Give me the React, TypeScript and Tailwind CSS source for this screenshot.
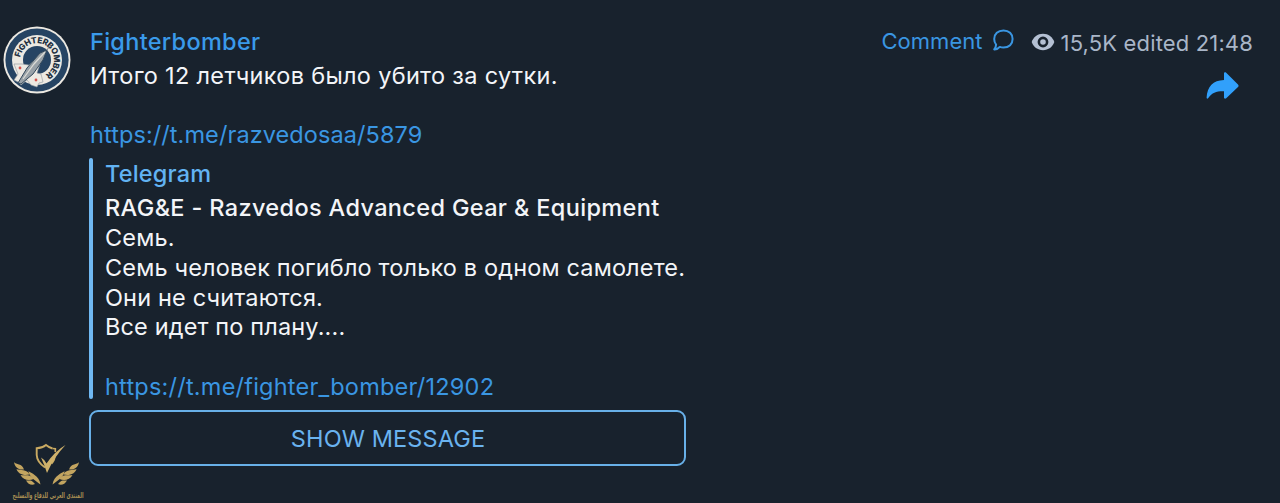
import type { ReactNode } from "react";
import { clsx } from "clsx";

const previewLines = ["Семь.", "Семь человек погибло только в одном самолете.", "Они не считаются.", "Все идет по плану...."];

function Avatar() {
  return (
    <svg aria-label="Fighterbomber" viewBox="0 0 68 68" className="size-[68px] shrink-0">
      <defs>
        <path id="badge-arc" d="M17.300 31.500A16.900 16.900 0 1 1 42 48.900" />
      </defs>
      <circle cx="34" cy="34" r="33.5" fill="#ece9e2" />
      <circle cx="34" cy="34" r="31.6" fill="#264463" />
      <circle cx="34" cy="34" r="25" fill="#ece9e2" />
      <circle cx="34" cy="34" r="14" fill="#264463" />
      <path
        d="M11 38L19 38L26 39L31 34L37 38L34 47L38 48L40 56L36 57L34 61L28 59L24 54L18 59L15 56L11 54L15 48Z"
        fill="#ece9e2"
        stroke="#8d959c"
        strokeWidth=".6"
      />
      <text className="font-['Inter'] text-[8.400px] font-extrabold" fill="#22303f">
        <textPath href="#badge-arc" textLength="68">
          FIGHTERBOMBER
        </textPath>
      </text>
      <path d="M44 24L37 27L24 42L15 57L18 58L30 48L40 34Z" fill="#98a1a7" stroke="#33495c" strokeWidth="1" />
      <path d="M42 26L31 38L20 53" stroke="#dcdcd6" strokeWidth="1.2" fill="none" />
      <path d="M44 24L48 18" stroke="#7f8a93" strokeWidth="1" />
      <circle cx="17" cy="42" r="1.400" fill="#d4534e" />
      <circle cx="33" cy="54" r="1.400" fill="#d4534e" />
    </svg>
  );
}

function CommentIcon() {
  return (
    <svg aria-hidden viewBox="0 0 24 24" className="size-6" fill="none" stroke="#3a96e2" strokeWidth="2" strokeLinejoin="round">
      <path d="M12.500 1.400C18 1.400 21.600 5 21.600 10S18 18.600 12.500 18.600C11.200 18.600 9.900 18.400 8.800 17.900C7.300 19.700 5.600 20.500 3.200 20.400C4.300 19.100 5 17.600 5.100 15.600C3.900 14.200 3.200 12.300 3.200 10C3.200 5 7 1.400 12.500 1.400Z" />
    </svg>
  );
}

function ViewsIcon() {
  return (
    <svg aria-hidden viewBox="0 0 24 18" className="h-[18px] w-6">
      <path d="M12 .8C6.600.8 2.300 4.200.7 9C2.300 13.800 6.600 17.200 12 17.200S21.700 13.800 23.300 9C21.700 4.200 17.400.8 12 .8Z" fill="#b4c0d3" />
      <circle cx="12" cy="9" r="4.100" fill="#b4c0d3" stroke="#18222d" strokeWidth="2.600" />
    </svg>
  );
}

function ShareIcon() {
  return (
    <svg aria-hidden viewBox="0 0 34 28" className="h-7 w-[34px]">
      <path
        d="M18 1.500C18 .3 19.300 0 20.200.8L32 12.500C32.800 13.400 32.800 14.200 32 15L20.200 26.300C19.300 27.200 18 26.800 18 25.600V19.300C10.500 19.100 6.300 20.600 2.300 26C1.500 27.100.5 26.900.6 25.600C1.300 14.500 7 8.400 18 8Z"
        fill="#31a0fb"
      />
    </svg>
  );
}

// one half of the laurel, mirrored for the other side
function Laurel() {
  return (
    <g fill="#c3a560">
      <path d="M2 19C4 22 10 20 12 26.500C7 27 3 25 2 19Z" />
      <path d="M4.500 26C8 28 15 25.500 17.500 31.500C11.500 33 6 31 4.500 26Z" />
      <path d="M8.500 32C13 33 18 30.500 21.500 36C17 38 11 37 8.500 32Z" />
      <path d="M14 37.500C17 38 19 36 23 41C20 42.500 16 41.500 14 37.500Z" />
      <path d="M16.500 28C19 30.500 27 32 28.500 41.500C24 38 17 34 16.500 28Z" />
    </g>
  );
}

function Watermark() {
  return (
    <svg viewBox="0 0 73 60" className="absolute top-[443px] left-3 h-[60px] w-[73px] overflow-visible">
      <Laurel />
      <g transform="matrix(-1 0 0 1 69 0)">
        <Laurel />
      </g>
      <path d="M40.500 5.500Q37 4.500 34 2Q30.500 5 24.700 5.200V12Q25 19 33 24.500M43 11Q43 17 39.500 20.500" fill="none" stroke="#c9aa62" strokeWidth="1.900" />
      <path d="M40.500 5.500L43.300 5.700V9" fill="none" stroke="#c9aa62" strokeWidth="1.700" />
      <path d="M29 14.500Q32 16 34.500 20.500Q43 8 53.500 2Q42 14 35 30Q32.500 22 29 14.500Z" fill="#d0b26b" />
      <text
        x="36"
        y="55"
        direction="rtl"
        textAnchor="middle"
        textLength="71"
        lengthAdjust="spacingAndGlyphs"
        className="font-['DejaVu_Sans',sans-serif] text-[8px] font-bold"
        fill="#a88f53"
      >
        المنتدى العربي للدفاع والتسليح
      </text>
    </svg>
  );
}

function Line({ children, className }: { children?: ReactNode; className?: string }) {
  return <p className={clsx("h-[29.800px] leading-[30px] whitespace-pre", className)}>{children}</p>;
}

export default function App() {
  return (
    <main className="relative h-[503px] w-[1280px] overflow-hidden bg-[#18222d] font-['Inter',sans-serif] text-[23.500px] text-[#f3f5f8]">
      <article className="flex pt-[26px] pl-[3px]">
        <Avatar />
        <div className="ml-[18px] w-[597px] shrink-0">
          <h1 className="h-[34px] pt-px pl-px text-[23.500px] leading-[30px] font-medium tracking-[0.3px] text-[#3a9aea]">Fighterbomber</h1>
          <Line className="pt-px pl-px tracking-[0.310px]">Итого 12 летчиков было убито за сутки.</Line>
          <Line />
          <Line className="pl-px tracking-[0.080px] text-[#3a96e2]">https://t.me/razvedosaa/5879</Line>
          <section className="mt-[9px] flex h-[241px]">
            <span className="w-1 shrink-0 rounded-sm bg-[#70b9f3]" />
            <div className="ml-3 pt-px">
              <Line className="mb-[4px] font-medium tracking-[0.2px] text-[#62b3f3]">Telegram</Line>
              <Line className="font-medium tracking-[0.350px]">RAG&E - Razvedos Advanced Gear & Equipment</Line>
              {previewLines.map((line) => (
                <Line key={line} className="tracking-[0.150px]">
                  {line}
                </Line>
              ))}
              <Line />
              <Line className="tracking-[0.220px] text-[#3a96e2]">https://t.me/fighter_bomber/12902</Line>
            </div>
          </section>
          <button className="mt-[11px] flex h-14 w-full items-center justify-center rounded-[9px] border-2 border-[#68b0e8] pt-px pl-px tracking-[0.120px] text-[#6ab3ef]">
            SHOW MESSAGE
          </button>
        </div>
        <aside className="ml-auto flex flex-col items-end pr-[27px]">
          <div className="flex h-[30px] items-center leading-[30px] whitespace-nowrap">
            <span className="text-[22px] tracking-[0.050px] text-[#3a96e2]">Comment</span>
            <span className="ml-2">
              <CommentIcon />
            </span>
            <span className="ml-4 pt-0.5">
              <ViewsIcon />
            </span>
            <span className="ml-1.5 pt-[3px] text-[22px] tracking-[0.150px] text-[#a9b6c8]">15,5K edited 21:48</span>
          </div>
          <div className="mt-4 mr-[13px]">
            <ShareIcon />
          </div>
        </aside>
      </article>
      <Watermark />
    </main>
  );
}
